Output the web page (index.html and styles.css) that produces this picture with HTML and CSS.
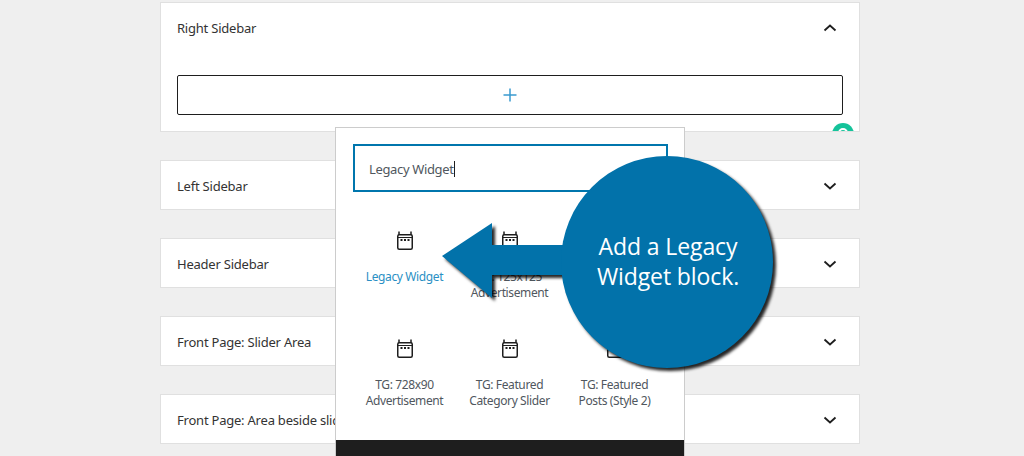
FILE: index.html
```html
<!DOCTYPE html>
<html lang="en">
<head>
  <meta charset="UTF-8" />
  <title>Add a Legacy Widget block</title>
  <link rel="stylesheet" href="styles.css">
</head>
<body>

  <!-- Widget areas -->
  <main class="areas">
    <section class="panel panel-open">
      <div class="panel-head">
        <h2>Right Sidebar</h2>
        <svg class="chevron" viewBox="0 0 24 24"><path d="M6.500 14.500 12 9.500l5.500 5"/></svg>
      </div>
      <div class="panel-body">
        <button class="appender">
          <svg viewBox="0 0 24 24"><path d="M12 5.500v13M5.500 12h13"/></svg>
        </button>
      </div>
      <span class="grammarly"></span>
    </section>

    <section class="panel">
      <div class="panel-head">
        <h2>Left Sidebar</h2>
        <svg class="chevron" viewBox="0 0 24 24"><path d="M6.500 9.500 12 14.500l5.500-5"/></svg>
      </div>
    </section>

    <section class="panel">
      <div class="panel-head">
        <h2>Header Sidebar</h2>
        <svg class="chevron" viewBox="0 0 24 24"><path d="M6.500 9.500 12 14.500l5.500-5"/></svg>
      </div>
    </section>

    <section class="panel">
      <div class="panel-head">
        <h2>Front Page: Slider Area</h2>
        <svg class="chevron" viewBox="0 0 24 24"><path d="M6.500 9.500 12 14.500l5.500-5"/></svg>
      </div>
    </section>

    <section class="panel">
      <div class="panel-head">
        <h2>Front Page: Area beside slider</h2>
        <svg class="chevron" viewBox="0 0 24 24"><path d="M6.500 9.500 12 14.500l5.500-5"/></svg>
      </div>
    </section>
  </main>

  <!-- Block inserter -->
  <div class="inserter">
    <div class="search">Legacy Widget<span class="caret"></span></div>
    <div class="blocks">
      <div class="block block-active">
        <svg viewBox="0 0 24 24"><use href="#cal"/></svg>
        <span>Legacy Widget</span>
      </div>
      <div class="block">
        <svg viewBox="0 0 24 24"><use href="#cal"/></svg>
        <span>TG: 125x125 Advertisement</span>
      </div>
      <div class="block">
        <svg viewBox="0 0 24 24"><use href="#cal"/></svg>
        <span>TG: 300x250 Advertisement</span>
      </div>
      <div class="block">
        <svg viewBox="0 0 24 24"><use href="#cal"/></svg>
        <span>TG: 728x90 Advertisement</span>
      </div>
      <div class="block">
        <svg viewBox="0 0 24 24"><use href="#cal"/></svg>
        <span>TG: Featured Category Slider</span>
      </div>
      <div class="block">
        <svg viewBox="0 0 24 24"><use href="#cal"/></svg>
        <span>TG: Featured Posts (Style 2)</span>
      </div>
    </div>
    <div class="inserter-foot"></div>
  </div>

  <!-- Callout -->
  <svg class="callout-shape" viewBox="0 0 360 240">
    <path d="M2 106 52 73 52 95 130 95 130 125 52 125 52 148Z"/>
    <circle cx="227" cy="112" r="106"/>
  </svg>
  <p class="callout-text">Add a Legacy<br>Widget block.</p>

  <svg class="icon-defs" width="0" height="0">
    <symbol id="cal" viewBox="0 0 24 24">
      <path d="M6 3.500v3.500M18 3.500v3.500" fill="none" stroke="#1e1e1e" stroke-width="1.500"/>
      <rect x="4.750" y="6.750" width="14.500" height="14.500" rx="1.500" fill="none" stroke="#1e1e1e" stroke-width="1.500"/>
      <path d="M5 9.500h14" stroke="#1e1e1e" stroke-width="1"/>
      <path d="M7.500 11h2v2h-2zM11 11h2v2h-2zM14.500 11h2v2h-2z" fill="#1e1e1e"/>
    </symbol>
  </svg>

</body>
</html>
```

FILE: styles.css
```css
html,
body {
  height: 100%;
  overflow: hidden;
}

body {
  margin: 0;
  background-color: #efefef;
  font-family: "Noto Sans", Arial, sans-serif;
  color: #1e1e1e;
  position: relative;
}

.areas {
  width: 700px;
  margin-left: 160px;
  padding-top: 2px;
  display: flex;
  flex-direction: column;
  gap: 28px;
}

.panel {
  background-color: #fff;
  border: 1px solid #e0e0e0;
  position: relative;
  overflow: hidden;
}

.panel-head {
  height: 48px;
  padding: 2px 17px 0 16px;
  box-sizing: border-box;
  display: flex;
  align-items: center;
  justify-content: space-between;
}

.panel-head h2 {
  margin: 0;
  font-size: 13px;
  font-weight: 400;
  letter-spacing: -0.22px;
  color: #333;
}

.chevron {
  width: 24px;
  height: 24px;
  fill: none;
  stroke: #1e1e1e;
  stroke-width: 1.800;
}

.panel-body {
  padding: 24px 16px 16px;
}

.appender {
  display: flex;
  align-items: center;
  justify-content: center;
  width: 100%;
  height: 40px;
  padding: 0;
  background: none;
  border: 1px solid #1e1e1e;
  border-radius: 2px;
}

.appender svg {
  width: 24px;
  height: 24px;
  fill: none;
  stroke: #3a9bd0;
  stroke-width: 1.500;
}

.grammarly {
  position: absolute;
  right: 5px;
  top: 120px;
  width: 22px;
  height: 22px;
  box-sizing: border-box;
  border-radius: 50%;
  background-color: #15c39a;
}

.grammarly::after {
  content: "";
  position: absolute;
  left: 6px;
  top: 5px;
  width: 10px;
  height: 10px;
  box-sizing: border-box;
  border: 2px solid #fff;
  border-radius: 50%;
}

.inserter {
  position: absolute;
  left: 335px;
  top: 127px;
  bottom: 0;
  width: 350px;
  box-sizing: border-box;
  background-color: #fff;
  border: 1px solid #ccc;
  border-bottom: 0;
  display: flex;
  flex-direction: column;
}

.search {
  margin: 16px 16px 0 17px;
  height: 48px;
  box-sizing: border-box;
  border: 2px solid #0076ad;
  padding: 2px 0 0 14px;
  display: flex;
  align-items: center;
  font-size: 13px;
  letter-spacing: -0.35px;
  color: #50575e;
}

.caret {
  width: 1px;
  height: 16px;
  background-color: #1e1e1e;
}

.blocks {
  margin: 16px 0 0 16px;
  display: grid;
  grid-template-columns: repeat(3, 105px);
  grid-auto-rows: 108px;
}

.block {
  display: flex;
  flex-direction: column;
  align-items: center;
  padding-top: 20px;
  text-align: center;
  font-size: 12px;
  line-height: 16px;
  letter-spacing: -0.38px;
  color: #50575e;
}

.block svg {
  width: 24px;
  height: 24px;
  margin-bottom: 17px;
  flex: none;
}

.block span {
  width: 90px;
}

.block-active {
  color: #2a8fc4;
}

.inserter-foot {
  margin-top: auto;
  height: 16px;
  background-color: #1e1e1e;
}

.callout-shape {
  position: absolute;
  left: 440px;
  top: 150px;
  width: 360px;
  height: 240px;
  fill: #0272aa;
  overflow: visible;
  filter: drop-shadow(3px 3px 1.500px rgba(0, 0, 0, 0.85));
}

.callout-text {
  position: absolute;
  left: 561px;
  top: 231px;
  width: 214px;
  margin: 0;
  text-align: center;
  font-family: "Open Sans", Arial, sans-serif;
  font-size: 23px;
  line-height: 30px;
  letter-spacing: -0.1px;
  color: #fff;
}

.icon-defs {
  position: absolute;
}
```
